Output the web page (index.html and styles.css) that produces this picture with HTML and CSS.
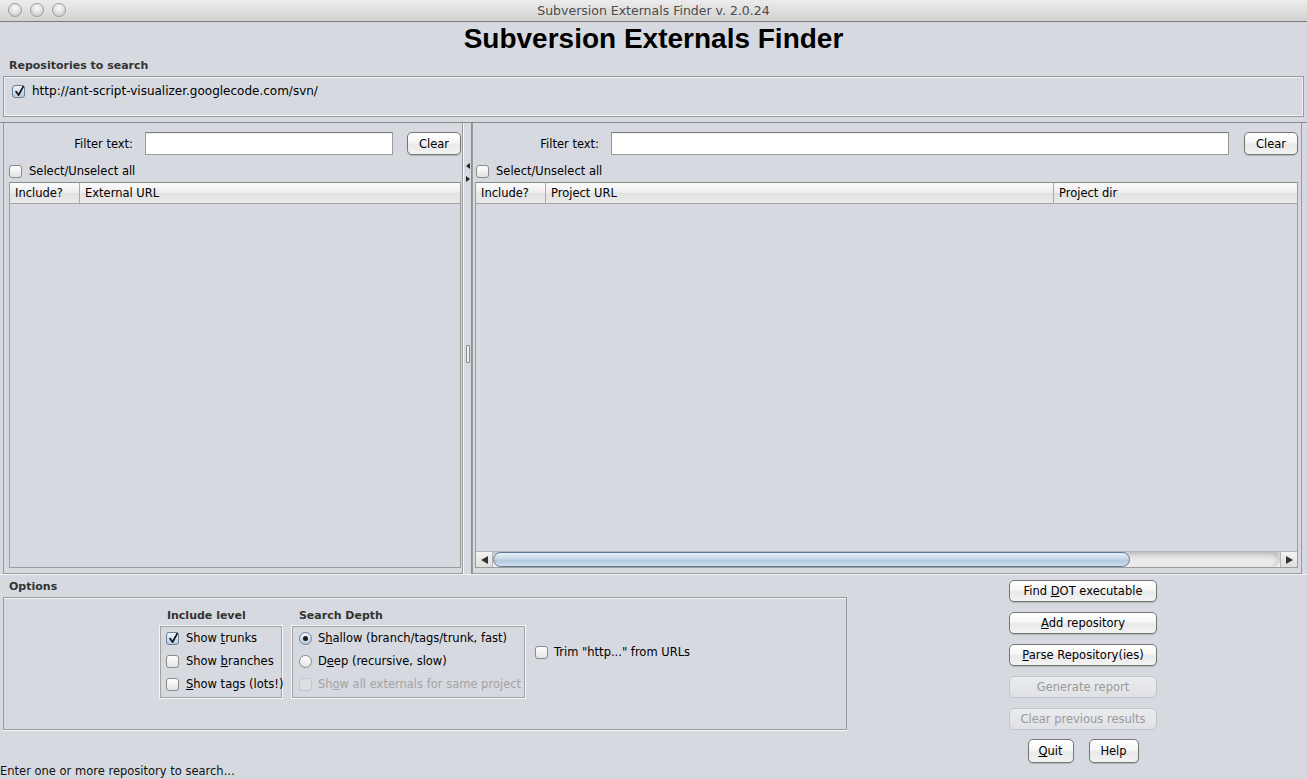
FILE: index.html
```html
<!DOCTYPE html>
<html>
<head>
<meta charset="utf-8">
<link rel="stylesheet" href="styles.css">
</head>
<body>
<div class="window">
  <div class="titlebar">
    <div class="lights"><span class="light"></span><span class="light"></span><span class="light"></span></div>
    <div class="wtitle">Subversion Externals Finder v. 2.0.24</div>
    <div></div>
  </div>
  <h1 class="heading">Subversion Externals Finder</h1>
  <div class="group-title repo-title">Repositories to search</div>
  <div class="repo-box">
    <div class="repo-list">
      <div class="repo-row">
        <span class="cb checked"><svg viewBox="0 0 13 13" width="13" height="13"><path d="M3 6.6 L5.6 10 L10.2 1.6" fill="none" stroke="#111" stroke-width="1.7" stroke-linecap="round" stroke-linejoin="round"/></svg></span>
        <span class="url">http://ant-script-visualizer.googlecode.com/svn/</span>
      </div>
    </div>
  </div>

  <div class="split">
    <div class="pane pane-left">
      <div class="filter-row">
        <span class="filter-label">Filter text:</span>
        <span class="field field-left"></span>
        <span class="btn btn-clear"><span>Clear</span></span>
      </div>
      <div class="select-row"><span class="cb"></span><span>Select/Unselect all</span></div>
      <div class="table table-left">
        <div class="thead">
          <div class="th col-inc">Include?</div>
          <div class="th col-rest">External URL</div>
        </div>
        <div class="tbody"></div>
      </div>
    </div>
    <div class="divider">
      <div class="arrows"><span class="arr-left"></span><span class="arr-right"></span></div>
      <div class="grip"></div>
    </div>
    <div class="pane pane-right">
      <div class="filter-row">
        <span class="filter-label">Filter text:</span>
        <span class="field field-right"></span>
        <span class="btn btn-clear"><span>Clear</span></span>
      </div>
      <div class="select-row"><span class="cb"></span><span>Select/Unselect all</span></div>
      <div class="table table-right">
        <div class="thead">
          <div class="th col-inc">Include?</div>
          <div class="th col-purl">Project URL</div>
          <div class="th col-rest">Project dir</div>
        </div>
        <div class="tbody"></div>
        <div class="hscroll">
          <span class="sarrow"><span class="tri-left"></span></span>
          <span class="thumb"></span>
          <span class="track"></span>
          <span class="sarrow"><span class="tri-right"></span></span>
        </div>
      </div>
    </div>
  </div>

  <div class="bottom">
    <div class="options-col">
      <div class="group-title">Options</div>
      <div class="options-box">
        <div class="sub">
          <div class="sub-title">Include level</div>
          <div class="sub-box sub-include">
            <div class="opt"><span class="cb checked"><svg viewBox="0 0 13 13" width="13" height="13"><path d="M3 6.6 L5.6 10 L10.2 1.6" fill="none" stroke="#111" stroke-width="1.7" stroke-linecap="round" stroke-linejoin="round"/></svg></span><span>Show <u>t</u>runks</span></div>
            <div class="opt"><span class="cb"></span><span>Show <u>b</u>ranches</span></div>
            <div class="opt"><span class="cb"></span><span><u>S</u>how tags (lots!)</span></div>
          </div>
        </div>
        <div class="sub">
          <div class="sub-title">Search Depth</div>
          <div class="sub-box sub-depth">
            <div class="opt"><span class="radio on"></span><span>S<u>h</u>allow (branch/tags/trunk, fast)</span></div>
            <div class="opt"><span class="radio"></span><span>D<u>e</u>ep (recursive, slow)</span></div>
            <div class="opt disabled"><span class="cb dis"></span><span>Sh<u>o</u>w all externals for same project</span></div>
          </div>
        </div>
        <div class="opt trim"><span class="cb"></span><span>Trim "http..." from URLs</span></div>
      </div>
    </div>
    <div class="buttons">
      <span class="btn btn-wide"><span>Find <u>D</u>OT executable</span></span>
      <span class="btn btn-wide"><span><u>A</u>dd repository</span></span>
      <span class="btn btn-wide"><span><u>P</u>arse Repository(ies)</span></span>
      <span class="btn btn-wide btn-dis"><span>Generate report</span></span>
      <span class="btn btn-wide btn-dis"><span>Clear previous results</span></span>
      <div class="small-row">
        <span class="btn btn-quit"><span><u>Q</u>uit</span></span>
        <span class="btn btn-help"><span>Help</span></span>
      </div>
    </div>
  </div>
  <div class="status">Enter one or more repository to search...</div>
</div>
</body>
</html>
```

FILE: styles.css
```css
* { box-sizing: border-box; }
html, body { margin: 0; padding: 0; }
body {
  width: 1307px;
  height: 779px;
  overflow: hidden;
  background: #d6d9df;
  font-family: "DejaVu Sans", "Noto Sans", sans-serif;
  font-size: 11.5px;
  color: #000;
}
.window { display: flex; flex-direction: column; height: 779px; }

/* title bar */
.titlebar {
  height: 22px;
  flex: none;
  border-bottom: 1px solid #7d7d7d;
  background: linear-gradient(#ececec, #d2d2d2);
  display: grid;
  grid-template-columns: 1fr auto 1fr;
  align-items: center;
}
.lights { display: flex; gap: 8px; padding-left: 8px; padding-bottom: 1px; }
.light {
  width: 14px; height: 14px; border-radius: 50%;
  border: 1px solid #9c9c9c;
  background: radial-gradient(circle at 50% 35%, #fbfbfb 0%, #dedede 55%, #bdbdbd 100%);
}
.wtitle { font-size: 12.5px; color: #4b4b4b; padding-bottom: 1px; }

.heading {
  margin: 0;
  height: 34px;
  flex: none;
  line-height: 34px;
  text-align: center;
  font-family: "Liberation Sans", Arial, sans-serif;
  font-weight: bold;
  font-size: 28px;
  color: #000;
}

.group-title {
  font-weight: bold;
  font-size: 11px;
  line-height: 13px;
  color: #333;
  padding-left: 9px;
}
.repo-title { margin-top: 3px; margin-bottom: 4px; flex: none; }

.repo-box {
  flex: none;
  margin: 0 3px;
  height: 41px;
  border: 1px solid #9a9a9a;
  box-shadow: inset 0 0 0 1px #eef0f3;
  padding: 3px 3px;
}
.repo-list { height: 100%; }
.repo-row { display: flex; align-items: center; gap: 7px; padding: 4px 0 0 5px; }
.url { font-size: 12px; }

/* checkbox / radio */
.cb {
  flex: none;
  width: 13px; height: 13px;
  border: 1px solid #8a8a8a;
  border-radius: 3px;
  background: linear-gradient(#ffffff, #e3e3e3);
  display: inline-block;
  position: relative;
}
.cb svg { position: absolute; left: 0; top: -1px; }
.cb.checked { background: linear-gradient(#eef4fb, #b9cbe0); border-color: #6d7f95; }
.cb.dis { border-color: #c3c5ca; background: #dcdfe4; }
.radio {
  flex: none;
  width: 13px; height: 13px;
  border: 1px solid #8a8a8a;
  border-radius: 50%;
  background: linear-gradient(#ffffff, #e3e3e3);
  display: inline-flex; align-items: center; justify-content: center;
}
.radio.on { background: linear-gradient(#eef4fb, #b9cbe0); border-color: #6d7f95; }
.radio.on::after { content: ""; width: 5px; height: 5px; border-radius: 50%; background: #1c1c1c; }

/* split pane */
.split {
  flex: none;
  margin-top: 5px;
  height: 453px;
  display: flex;
  border-top: 1px solid #8c8c8c;
  border-bottom: 1px solid #f4f5f7;
}
.pane {
  display: flex; flex-direction: column;
  border-left: 1px solid #9a9a9a;
  border-right: 1px solid #9a9a9a;
  border-bottom: 1px solid #9a9a9a;
}
.pane-left { width: 460px; margin-left: 3px; padding: 9px 0 5px 5px; }
.pane-right { width: 830px; padding: 9px 3px 5px 2px; }

.filter-row { display: flex; align-items: center; height: 23px; }
.filter-label { width: 124px; text-align: right; flex: none; }
.field {
  height: 23px;
  background: #fff;
  border: 1px solid #9b9b9b;
  border-top-color: #7c7c7c;
  box-shadow: inset 0 1px 1px rgba(0,0,0,0.08);
}
.field-left { width: 248px; margin-left: 12px; margin-right: 14px; }
.field-right { flex: 1; margin-left: 12px; margin-right: 15px; }

.btn {
  display: inline-flex; align-items: center; justify-content: center;
  height: 22px;
  border: 1px solid #767676;
  border-radius: 5px;
  background: linear-gradient(#ffffff 0%, #f6f6f6 45%, #e9e9e9 55%, #f3f3f3 100%);
  box-shadow: 0 1px 1px rgba(0,0,0,0.18);
  color: #000;
  white-space: nowrap;
}
.btn-clear { width: 54px; height: 23px; flex: none; }
.btn-wide { width: 148px; }
.btn-dis {
  border-color: #c2c4c8;
  color: #9a9a9a;
  background: linear-gradient(#e9ebee, #dfe1e5);
  box-shadow: none;
}

.select-row { display: flex; align-items: center; gap: 7px; height: 14px; margin-top: 9px; }
.pane-right .select-row { padding-left: 1px; }

.table {
  margin-top: 4px;
  flex: 1;
  display: flex; flex-direction: column;
  border: 1px solid #9c9c9c;
  border-top-color: #8a8a8a;
}
.table-left { width: 452px; }
.thead {
  height: 21px; flex: none;
  display: flex;
  background: linear-gradient(#fcfcfc, #ececec 50%, #e2e2e2 51%, #eaeaea);
  border-bottom: 1px solid #a3a3a3;
}
.th {
  padding-left: 5px;
  line-height: 20px;
  border-right: 1px solid #acacac;
}
.th:last-child { border-right: none; }
.col-inc { width: 70px; flex: none; }
.col-purl { width: 508px; flex: none; }
.col-rest { flex: 1; }
.tbody { flex: 1; }

.hscroll {
  height: 16px; flex: none;
  display: flex;
  border-top: 1px solid #b5b5b5;
  background: linear-gradient(#c8c8c8, #e6e6e6 40%, #f2f2f2);
}
.sarrow {
  width: 17px; flex: none;
  display: flex; align-items: center; justify-content: center;
  background: linear-gradient(#f4f4f4, #dedede);
  border-right: 1px solid #b8b8b8;
}
.sarrow:last-child { border-right: none; border-left: 1px solid #b8b8b8; }
.tri-left { width: 0; height: 0; border-top: 4px solid transparent; border-bottom: 4px solid transparent; border-right: 7px solid #333; }
.tri-right { width: 0; height: 0; border-top: 4px solid transparent; border-bottom: 4px solid transparent; border-left: 7px solid #333; }
.thumb {
  width: 637px; flex: none;
  border: 1px solid #5f7894;
  border-radius: 8px;
  background: linear-gradient(#e8f0f8 0%, #cadbeb 40%, #b3c9df 60%, #cfe0f0 100%);
}
.track { flex: 1; border-radius: 0 8px 8px 0; box-shadow: inset -3px 0 4px rgba(0,0,0,0.12); }

.divider {
  width: 9px; flex: none;
  display: flex; flex-direction: column; align-items: center;
  border-left: 1px solid #f7f8fa;
  border-right: 1px solid #8f8f8f;
}
.arrows { display: flex; flex-direction: column; gap: 7px; margin-top: 40px; }
.arr-left { width: 0; height: 0; border-top: 3px solid transparent; border-bottom: 3px solid transparent; border-right: 4px solid #222; }
.arr-right { width: 0; height: 0; border-top: 3px solid transparent; border-bottom: 3px solid transparent; border-left: 4px solid #222; }
.grip {
  margin-top: 163px;
  width: 4px; height: 18px;
  border: 1px solid #8a8a8a;
  border-radius: 1px;
  background: #eef0f3;
}

/* bottom */
.bottom { flex: none; height: 189px; display: flex; }
.options-col { width: 847px; flex: none; padding-top: 5px; }
.options-box {
  margin: 4px 0 0 3px;
  height: 133px;
  border: 1px solid #9a9a9a;
  box-shadow: 0 1px 0 #f5f6f8, inset 0 1px 0 #f5f6f8;
  display: flex;
  align-items: center;
  justify-content: center;
  gap: 10px;
  padding-bottom: 21px;
}
.sub { display: flex; flex-direction: column; }
.sub-title {
  font-weight: bold; font-size: 11px; color: #333;
  line-height: 13px; padding-left: 7px; margin-bottom: 4px;
}
.sub-box {
  border: 1px solid #a3a3a3;
  box-shadow: 0 0 0 1px #f6f7f9;
  padding: 0 4px 1px 5px;
}
.sub-include { width: 122px; }
.sub-depth { width: 233px; padding-left: 6px; }
.opt { display: flex; align-items: center; gap: 7px; height: 23px; white-space: nowrap; }
.sub-depth .opt { gap: 6px; }
.opt.disabled { color: #a3a3a3; }
.trim { gap: 6px; margin-top: -2px; }

.buttons {
  margin-left: 162px;
  padding-top: 5px;
  width: 148px;
  display: flex; flex-direction: column; gap: 10px;
}
.small-row { display: flex; justify-content: center; gap: 15px; margin-top: -1px; }
.btn-quit { width: 46px; height: 24px; }
.btn-help { width: 50px; height: 24px; }

.status { flex: none; height: 15px; line-height: 15px; padding-left: 0; color: #111; }
```
